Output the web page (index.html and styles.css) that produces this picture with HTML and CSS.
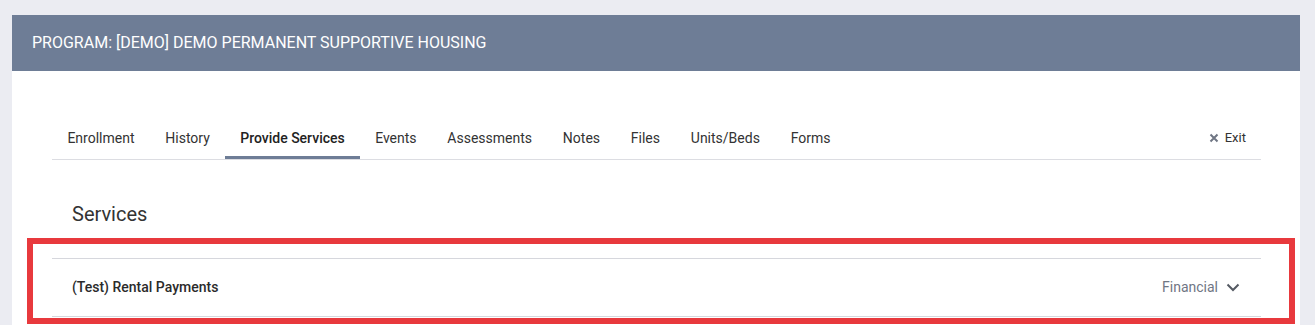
FILE: index.html
```html
<!DOCTYPE html>
<html>

<head>
    <title>Provide Services</title>
    <meta http-equiv="Content-Type" content="text/html; charset=UTF-8">
    <link rel="stylesheet" href="styles.css">
</head>

<body>
    <div class='card'>
        <div class='card-header'>Program: [DEMO] Demo Permanent Supportive Housing</div>
        <div class='card-body'>
            <div class='tabs'>
                <a class='tab'>Enrollment</a>
                <a class='tab'>History</a>
                <a class='tab active'>Provide Services</a>
                <a class='tab'>Events</a>
                <a class='tab'>Assessments</a>
                <a class='tab'>Notes</a>
                <a class='tab'>Files</a>
                <a class='tab'>Units/Beds</a>
                <a class='tab'>Forms</a>
                <a class='tab exit'>
                    <svg width="10" height="10" viewBox="0 0 10 10">
                        <path d="M1.5 1.5 L8.5 8.5 M8.5 1.5 L1.5 8.5" stroke="#6f7684" stroke-width="2" fill="none" />
                    </svg>
                    Exit
                </a>
            </div>

            <h2 class='section-title'>Services</h2>

            <div class='service-list'>
                <div class='service-row'>
                    <span class='service-name'>(Test) Rental Payments</span>
                    <span class='service-type'>
                        Financial
                        <svg width="14" height="9" viewBox="0 0 14 9">
                            <path d="M1.5 1.5 L7 7 L12.5 1.5" stroke="#555a63" stroke-width="2" fill="none" />
                        </svg>
                    </span>
                </div>
                <div class='highlight'></div>
            </div>
        </div>
    </div>
</body>

</html>
```

FILE: styles.css
```css
html,
body
{
    margin: 0;
    height: 100%;
    font-family: Roboto, "Liberation Sans", sans-serif;
}

body
{
    color: #333;
    background-color: #ebecf2;
    padding: 15px 15px 0 12px;
    box-sizing: border-box;
    overflow: hidden;
}

.card
{
    background-color: #fff;
    height: 100%;
}

.card-header
{
    height: 56px;
    line-height: 56px;
    padding: 0 20px;
    background-color: #6e7d96;
    color: #fff;
    font-size: 16px;
    text-transform: uppercase;
}

.card-body
{
    padding: 46px 39px 0 40px;
}

.tabs
{
    display: flex;
    border-bottom: 1px solid #dcdde2;
}

.tab
{
    display: block;
    padding: 13px 15.4px 10px;
    line-height: 16px;
    font-size: 14px;
    color: #333;
    border-bottom: 3px solid transparent;
    cursor: pointer;
}

.tab.active
{
    padding: 13px 15px 10px;
    font-weight: 500;
    color: #222;
    border-bottom-color: #6e7d96;
}

.tab.exit
{
    margin-left: auto;
    padding-right: 15px;
    font-size: 13px;
    display: flex;
    align-items: center;
    gap: 6px;
}

.section-title
{
    margin: 42px 0 0;
    padding-left: 20px;
    font-size: 20px;
    line-height: 24px;
    font-weight: 400;
    color: #333;
}

.service-list
{
    position: relative;
    margin-top: 32px;
    border-top: 1px solid #d6d7dd;
}

.service-row
{
    display: flex;
    align-items: center;
    justify-content: space-between;
    padding: 20px 21px 21px 20px;
    line-height: 16px;
    border-bottom: 1px solid #d6d7dd;
}

.service-name
{
    font-size: 14px;
    font-weight: 500;
    color: #2b2b2b;
}

.service-type
{
    display: flex;
    align-items: center;
    gap: 8px;
    font-size: 14px;
    color: #6f7684;
}

.highlight
{
    position: absolute;
    left: -25px;
    top: -21px;
    right: -34px;
    bottom: -7px;
    border: 6px solid #e8393d;
    pointer-events: none;
}
```
